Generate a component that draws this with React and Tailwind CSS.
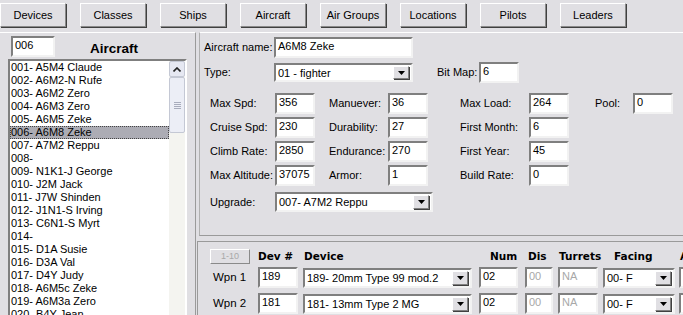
import React from 'react';

const tabs = ['Devices', 'Classes', 'Ships', 'Aircraft', 'Air Groups', 'Locations', 'Pilots', 'Leaders'];

const aircraft = [
  '001- A5M4 Claude',
  '002- A6M2-N Rufe',
  '003- A6M2 Zero',
  '004- A6M3 Zero',
  '005- A6M5 Zeke',
  '006- A6M8 Zeke',
  '007- A7M2 Reppu',
  '008-',
  '009- N1K1-J George',
  '010- J2M Jack',
  '011- J7W Shinden',
  '012- J1N1-S Irving',
  '013- C6N1-S Myrt',
  '014-',
  '015- D1A Susie',
  '016- D3A Val',
  '017- D4Y Judy',
  '018- A6M5c Zeke',
  '019- A6M3a Zero',
  '020- B4Y Jean',
];

// sunken edit box, win classic look
function Field({ w, value, dim }) {
  return (
    <div
      className={`${w} h-[21px] shrink-0 bg-white border-2 border-t-[#7f7f7f] border-l-[#7f7f7f] border-b-[#f2f2f2] border-r-[#f2f2f2] pl-[2px] leading-[14px] ${dim ? 'text-[#a8a8a8]' : 'text-black'}`}
    >
      {value}
    </div>
  );
}

function Arrow() {
  return (
    <div className="w-[16px] h-full shrink-0 bg-[#e0dfe3] border border-t-white border-l-white border-b-[#808080] border-r-[#808080] shadow-[1px_1px_0_#404040] flex items-center justify-center">
      <svg width="7" height="4" viewBox="0 0 7 4">
        <path d="M0 0h7L3.5 4z" fill="#000" />
      </svg>
    </div>
  );
}

function Select({ w, value, h = 'h-[20px]' }) {
  return (
    <div
      className={`${w} ${h} shrink-0 bg-white border-2 border-t-[#7f7f7f] border-l-[#7f7f7f] border-b-[#f2f2f2] border-r-[#f2f2f2] flex items-stretch`}
    >
      <div className="flex-1 pl-[2px] leading-[16px] whitespace-nowrap overflow-hidden">{value}</div>
      <div className="py-[1px] pr-[2px] flex">
        <Arrow />
      </div>
    </div>
  );
}

function Stat({ label, lw, value, gap }) {
  return (
    <>
      <div className={`${gap} ${lw} shrink-0 leading-[21px]`}>{label}</div>
      <Field w="w-[40px]" value={value} />
    </>
  );
}

function Scrollbar() {
  return (
    <div className="w-[16px] shrink-0 flex flex-col bg-[#f4f4f0]">
      <div className="h-[16px] shrink-0 rounded-[2px] border border-[#c4c8d4] bg-[#e6e8f2] flex items-center justify-center">
        <svg width="8" height="5" viewBox="0 0 8 5">
          <path d="M0.5 4.5L4 1l3.5 3.5" stroke="#222" strokeWidth="1.6" fill="none" />
        </svg>
      </div>
      <div className="h-[56px] shrink-0 rounded-[2px] border border-[#c4c8d4] bg-[#eceef6] flex flex-col items-center justify-center gap-[1px]">
        <div className="w-[7px] h-[1px] bg-[#a8acbc]" />
        <div className="w-[7px] h-[1px] bg-[#a8acbc]" />
        <div className="w-[7px] h-[1px] bg-[#a8acbc]" />
        <div className="w-[7px] h-[1px] bg-[#a8acbc]" />
      </div>
      <div className="flex-1" />
    </div>
  );
}

export default function App() {
  return (
    <div className="w-[683px] h-[315px] overflow-hidden bg-[#e0dfe3] text-[11px] text-black font-['Liberation_Sans',Arial,sans-serif]">
      {/* top toolbar */}
      <div className="h-[32px] pt-[3px] flex gap-[14px]">
        {tabs.map(t => (
          <div
            key={t}
            className="w-[66px] h-[24px] shrink-0 bg-[#e0dfe3] border border-t-white border-l-white border-b-[#8a8a8a] border-r-[#8a8a8a] shadow-[1px_1px_0_#404040] flex items-center justify-center whitespace-nowrap"
          >
            {t}
          </div>
        ))}
      </div>

      <div className="flex h-[283px]">
        {/* left list panel */}
        <div className="w-[196px] shrink-0 border-t border-t-white border-r border-r-[#9a9a9a] flex flex-col">
          <div className="flex items-center h-[30px] pl-[11px]">
            <Field w="w-[44px]" value="006" />
            <div className="ml-[35px] pt-[6px] font-bold text-[13.5px] font-['Liberation_Sans',Arial,sans-serif]">Aircraft</div>
          </div>
          <div className="ml-[8px] w-[179px] flex-1 bg-white border-2 border-t-[#7f7f7f] border-l-[#7f7f7f] border-b-0 border-r-white flex">
            <div className="flex-1 flex flex-col overflow-hidden">
              {aircraft.map((a, i) => (
                <div
                  key={a}
                  className={`h-[13px] shrink-0 leading-[13px] pl-[1px] whitespace-nowrap ${i === 5 ? 'bg-[#acacb4] outline-1 outline-dotted outline-[#444] -outline-offset-1' : ''}`}
                >
                  {a}
                </div>
              ))}
            </div>
            <Scrollbar />
          </div>
        </div>

        {/* right side */}
        <div className="flex-1 ml-[1px] flex flex-col">
          <div className="h-[204px] ml-[2px] border-t border-t-white border-l border-l-[#b0b0b0] border-b border-b-[#9a9a9a] pt-[4px] pl-[4px]">
            <div className="flex items-center">
              <div className="w-[70px] shrink-0">Aircraft name:</div>
              <Field w="w-[139px]" value="A6M8 Zeke" />
            </div>
            <div className="flex items-center mt-[4px]">
              <div className="w-[70px] shrink-0">Type:</div>
              <Select w="w-[139px]" value="01 - fighter" h="h-[19px]" />
              <div className="ml-[24px] w-[42px] shrink-0">Bit Map:</div>
              <Field w="w-[40px]" value="6" />
            </div>

            <div className="mt-[10px] pl-[6px] flex flex-col gap-[3px]">
              <div className="flex">
                <Stat label="Max Spd:" lw="w-[65px]" value="356" gap="" />
                <Stat label="Manuever:" lw="w-[59px]" value="36" gap="ml-[14px]" />
                <Stat label="Max Load:" lw="w-[69px]" value="264" gap="ml-[32px]" />
                <Stat label="Pool:" lw="w-[38px]" value="0" gap="ml-[26px]" />
              </div>
              <div className="flex">
                <Stat label="Cruise Spd:" lw="w-[65px]" value="230" gap="" />
                <Stat label="Durability:" lw="w-[59px]" value="27" gap="ml-[14px]" />
                <Stat label="First Month:" lw="w-[69px]" value="6" gap="ml-[32px]" />
              </div>
              <div className="flex">
                <Stat label="Climb Rate:" lw="w-[65px]" value="2850" gap="" />
                <Stat label="Endurance:" lw="w-[59px]" value="270" gap="ml-[14px]" />
                <Stat label="First Year:" lw="w-[69px]" value="45" gap="ml-[32px]" />
              </div>
              <div className="flex">
                <Stat label="Max Altitude:" lw="w-[65px]" value="37075" gap="" />
                <Stat label="Armor:" lw="w-[59px]" value="1" gap="ml-[14px]" />
                <Stat label="Build Rate:" lw="w-[69px]" value="0" gap="ml-[32px]" />
              </div>
              <div className="flex items-center mt-[3px]">
                <div className="w-[65px] shrink-0">Upgrade:</div>
                <Select w="w-[158px]" value="007- A7M2 Reppu" />
              </div>
            </div>
          </div>

          {/* weapons section */}
          <div className="mt-[5px] flex-1 border-t border-t-[#9a9a9a] border-l border-l-[#9a9a9a] pt-[7px]">
            <div className="flex items-center h-[15px] font-bold text-[10.5px] font-['DejaVu_Sans',Verdana,sans-serif]">
              <div className="ml-[12px] w-[40px] h-[15px] shrink-0 border border-t-white border-l-white border-b-[#8a8a8a] border-r-[#8a8a8a] flex items-center justify-center font-normal text-[9px] text-[#a8a8a8] font-['Liberation_Sans',Arial,sans-serif]">
                1-10
              </div>
              <div className="ml-[8px] w-[46px] shrink-0">Dev #</div>
              <div className="w-[186px] shrink-0">Device</div>
              <div className="w-[38px] shrink-0">Num</div>
              <div className="w-[31px] shrink-0">Dis</div>
              <div className="w-[55px] shrink-0">Turrets</div>
              <div className="w-[66px] shrink-0">Facing</div>
              <div>A</div>
            </div>
            {[
              ['Wpn 1', '189', '189- 20mm Type 99 mod.2'],
              ['Wpn 2', '181', '181- 13mm Type 2 MG'],
            ].map(([w, n, d], i) => (
              <div key={w} className={`flex items-center ${i === 0 ? 'mt-[3px]' : 'mt-[5px]'}`}>
                <div className="ml-[15px] w-[45px] shrink-0 text-[11.5px]">{w}</div>
                <Field w="w-[40px]" value={n} />
                <div className="ml-[5px]">
                  <Select w="w-[169px]" value={d} />
                </div>
                <div className="ml-[7px]">
                  <Field w="w-[39px]" value="02" />
                </div>
                <div className="ml-[7px]">
                  <Field w="w-[28px]" value="00" dim />
                </div>
                <div className="ml-[5px]">
                  <Field w="w-[40px]" value="NA" dim />
                </div>
                <div className="ml-[5px]">
                  <Select w="w-[72px]" value="00- F" />
                </div>
                <div className="ml-[4px]">
                  <Field w="w-[20px]" value="" />
                </div>
              </div>
            ))}
          </div>
        </div>
      </div>
    </div>
  );
}
